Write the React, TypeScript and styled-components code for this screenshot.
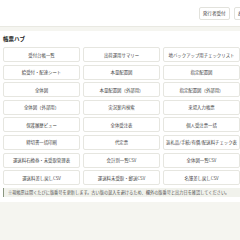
import React from "react";
import styled, { createGlobalStyle } from "styled-components";

const GlobalStyle = createGlobalStyle`
  html, body {
    margin: 0;
    padding: 0;
    background: #f5f5f0;
    overflow: hidden;
  }
  body {
    font-family: "Noto Sans CJK JP", "Noto Sans", sans-serif;
    color: #333;
  }
`;

const reports = [
  "受付台帳一覧", "出荷運用サマリー", "地バックアップ用チェックリスト",
  "給受付・配達シート", "本量配置図", "指定配置図",
  "全体図", "本量配置図（外部用）", "指定配置図（外部用）",
  "全体図（外部用）", "実況案内検索", "来場入力帳票",
  "保護履歴ビュー", "全体受注表", "個人受注票一括",
  "締切書一括印刷", "代定票", "返礼品/手続/有償/配送料チェック表",
  "運送料石換券・未受取管理表", "会計別一覧CSV", "全体図一覧CSV",
  "運送料差し戻しCSV", "運送料未受取・郵送CSV", "名簿差し戻しCSV",
];

export default function App() {
  return (
    <>
      <GlobalStyle />
      <Page>
        <Header>
          <HeaderActions>
            <HeaderButton>発行者受付</HeaderButton>
            <HeaderButton>お知らせ</HeaderButton>
          </HeaderActions>
        </Header>
        <Card>
          <Title>帳票ハブ</Title>
          <Grid>
            {reports.map((name) => (
              <ReportButton key={name}>{name}</ReportButton>
            ))}
          </Grid>
          <Notice>
            ※現帳票は開くたびに版番号を更新します。古い版の混入を避けるため、欄外の版番号と出力日を確認してください。
          </Notice>
        </Card>
      </Page>
    </>
  );
}

const Page = styled.div`
  width: 240px;
  display: flex;
  flex-direction: column;
`;

const Header = styled.header`
  height: 26px;
  background: #fff;
  border-bottom: 1px solid #e9e9e2;
  display: flex;
  justify-content: flex-end;
  align-items: center;
  overflow: hidden;
`;

const HeaderActions = styled.div`
  display: flex;
  gap: 4px;
  margin-right: -20px;
`;

const HeaderButton = styled.button`
  height: 13px;
  padding: 0 3px;
  border: 1px solid #e2e2dc;
  border-radius: 2px;
  background: #fff;
  font-family: inherit;
  font-size: 4.6px;
  color: #444;
  white-space: nowrap;
`;

const Card = styled.main`
  margin-top: 4px;
  background: #fff;
  padding: 4px 0 5px 3px;
  display: flex;
  flex-direction: column;
`;

const Title = styled.h1`
  margin: 0 0 4px;
  font-size: 5.5px;
  font-weight: 700;
  line-height: 8px;
  color: #222;
`;

const Grid = styled.div`
  display: grid;
  grid-template-columns: repeat(3, 77px);
  column-gap: 3px;
  row-gap: 2.6px;
`;

const ReportButton = styled.button`
  height: 15px;
  padding: 0;
  border: 1px solid #e6e6e0;
  border-radius: 2px;
  background: #fff;
  font-family: inherit;
  font-size: 4.4px;
  color: #444;
  white-space: nowrap;
  overflow: hidden;
`;

const Notice = styled.div`
  margin: 3px 0 0;
  padding: 2px 4px;
  border-left: 1.5px solid #8a9680;
  background: #f1f2ec;
  font-size: 4.2px;
  line-height: 5px;
  color: #555;
  white-space: nowrap;
  overflow: hidden;
`;
